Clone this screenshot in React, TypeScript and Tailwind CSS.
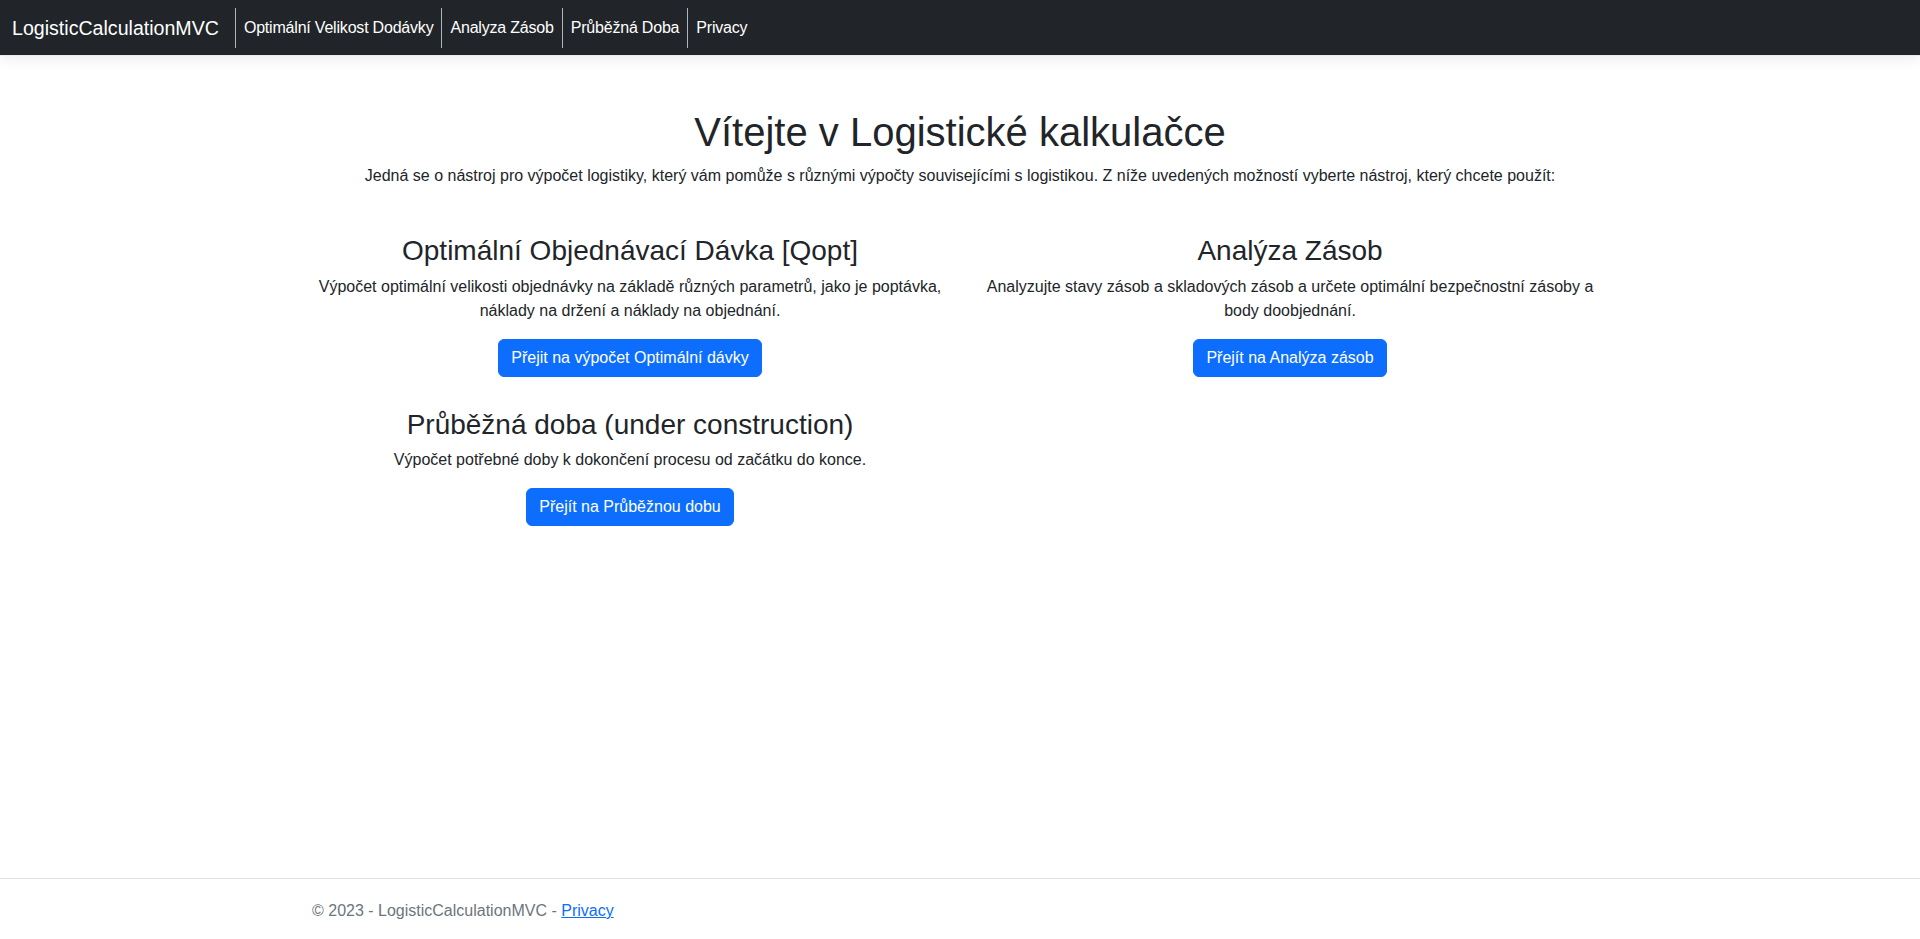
import React from 'react'

const font = {fontFamily: '"Liberation Sans", Arial, sans-serif'}

const navLinks = ['Optimální Velikost Dodávky', 'Analyza Zásob', 'Průběžná Doba', 'Privacy']

function Tool({title, lines, button}: { title: string, lines: string[], button: string }) {
    return (
        <div className="flex flex-col items-center text-center">
            <h3 className="text-[28px] leading-[1.2] font-medium text-[#212529] mb-[7px]">{title}</h3>
            <p className="text-base leading-6 text-[#212529] mb-4">
                {lines.map((line, i) => (
                    <React.Fragment key={i}>
                        {i > 0 && <br/>}
                        {line}
                    </React.Fragment>
                ))}
            </p>
            <button
                type="button"
                className="bg-[#0d6efd] text-white text-base leading-6 px-3 py-[6px] rounded-[6px] border border-[#0d6efd]"
            >
                {button}
            </button>
        </div>
    )
}

export default function App() {
    return (
        <div className="min-h-screen flex flex-col bg-white" style={font}>
            <header className="relative z-10 bg-[#212529] border-b border-[#e9ecef] shadow-[0_4px_12px_rgba(0,0,0,0.07)]">
                <nav className="flex items-center h-[55px] px-3">
                    <a className="text-white text-[19.6px] leading-[30px] py-[5px] mr-4">LogisticCalculationMVC</a>
                    <ul className="flex items-center">
                        {navLinks.map((link) => (
                            <li key={link} className="border-l border-[#adb5bd]">
                                <a className="block text-white text-base leading-6 px-2 py-2 tracking-[-0.2px]">{link}</a>
                            </li>
                        ))}
                    </ul>
                </nav>
            </header>

            <main className="flex-1 w-[1320px] mx-auto px-3">
                <div className="text-center mt-[52px]">
                    <h1 className="text-[40px] leading-[1.2] font-medium text-[#212529] mb-2">
                        Vítejte v Logistické kalkulačce
                    </h1>
                    <p className="text-base leading-6 text-[#212529]">
                        Jedná se o nástroj pro výpočet logistiky, který vám pomůže s různými výpočty souvisejícími s logistikou. Z níže uvedených možností vyberte nástroj, který chcete použít:
                    </p>
                </div>

                <div className="grid grid-cols-2 -mx-3 mt-[46px] gap-y-[31px]">
                    <div className="px-3">
                        <Tool
                            title="Optimální Objednávací Dávka [Qopt]"
                            lines={[
                                'Výpočet optimální velikosti objednávky na základě různých parametrů, jako je poptávka,',
                                'náklady na držení a náklady na objednání.'
                            ]}
                            button="Přejit na výpočet Optimální dávky"
                        />
                    </div>
                    <div className="px-3">
                        <Tool
                            title="Analýza Zásob"
                            lines={[
                                'Analyzujte stavy zásob a skladových zásob a určete optimální bezpečnostní zásoby a',
                                'body doobjednání.'
                            ]}
                            button="Přejít na Analýza zásob"
                        />
                    </div>
                    <div className="px-3">
                        <Tool
                            title="Průběžná doba (under construction)"
                            lines={['Výpočet potřebné doby k dokončení procesu od začátku do konce.']}
                            button="Přejít na Průběžnou dobu"
                        />
                    </div>
                </div>
            </main>

            <footer className="border-t border-[#dee2e6] text-[#6c757d]">
                <div className="w-[1320px] h-[60px] mx-auto px-3 flex items-center pt-[4px] text-base leading-6">
                    <span>© 2023 - LogisticCalculationMVC - <a className="text-[#0d6efd] underline">Privacy</a></span>
                </div>
            </footer>
        </div>
    )
}
